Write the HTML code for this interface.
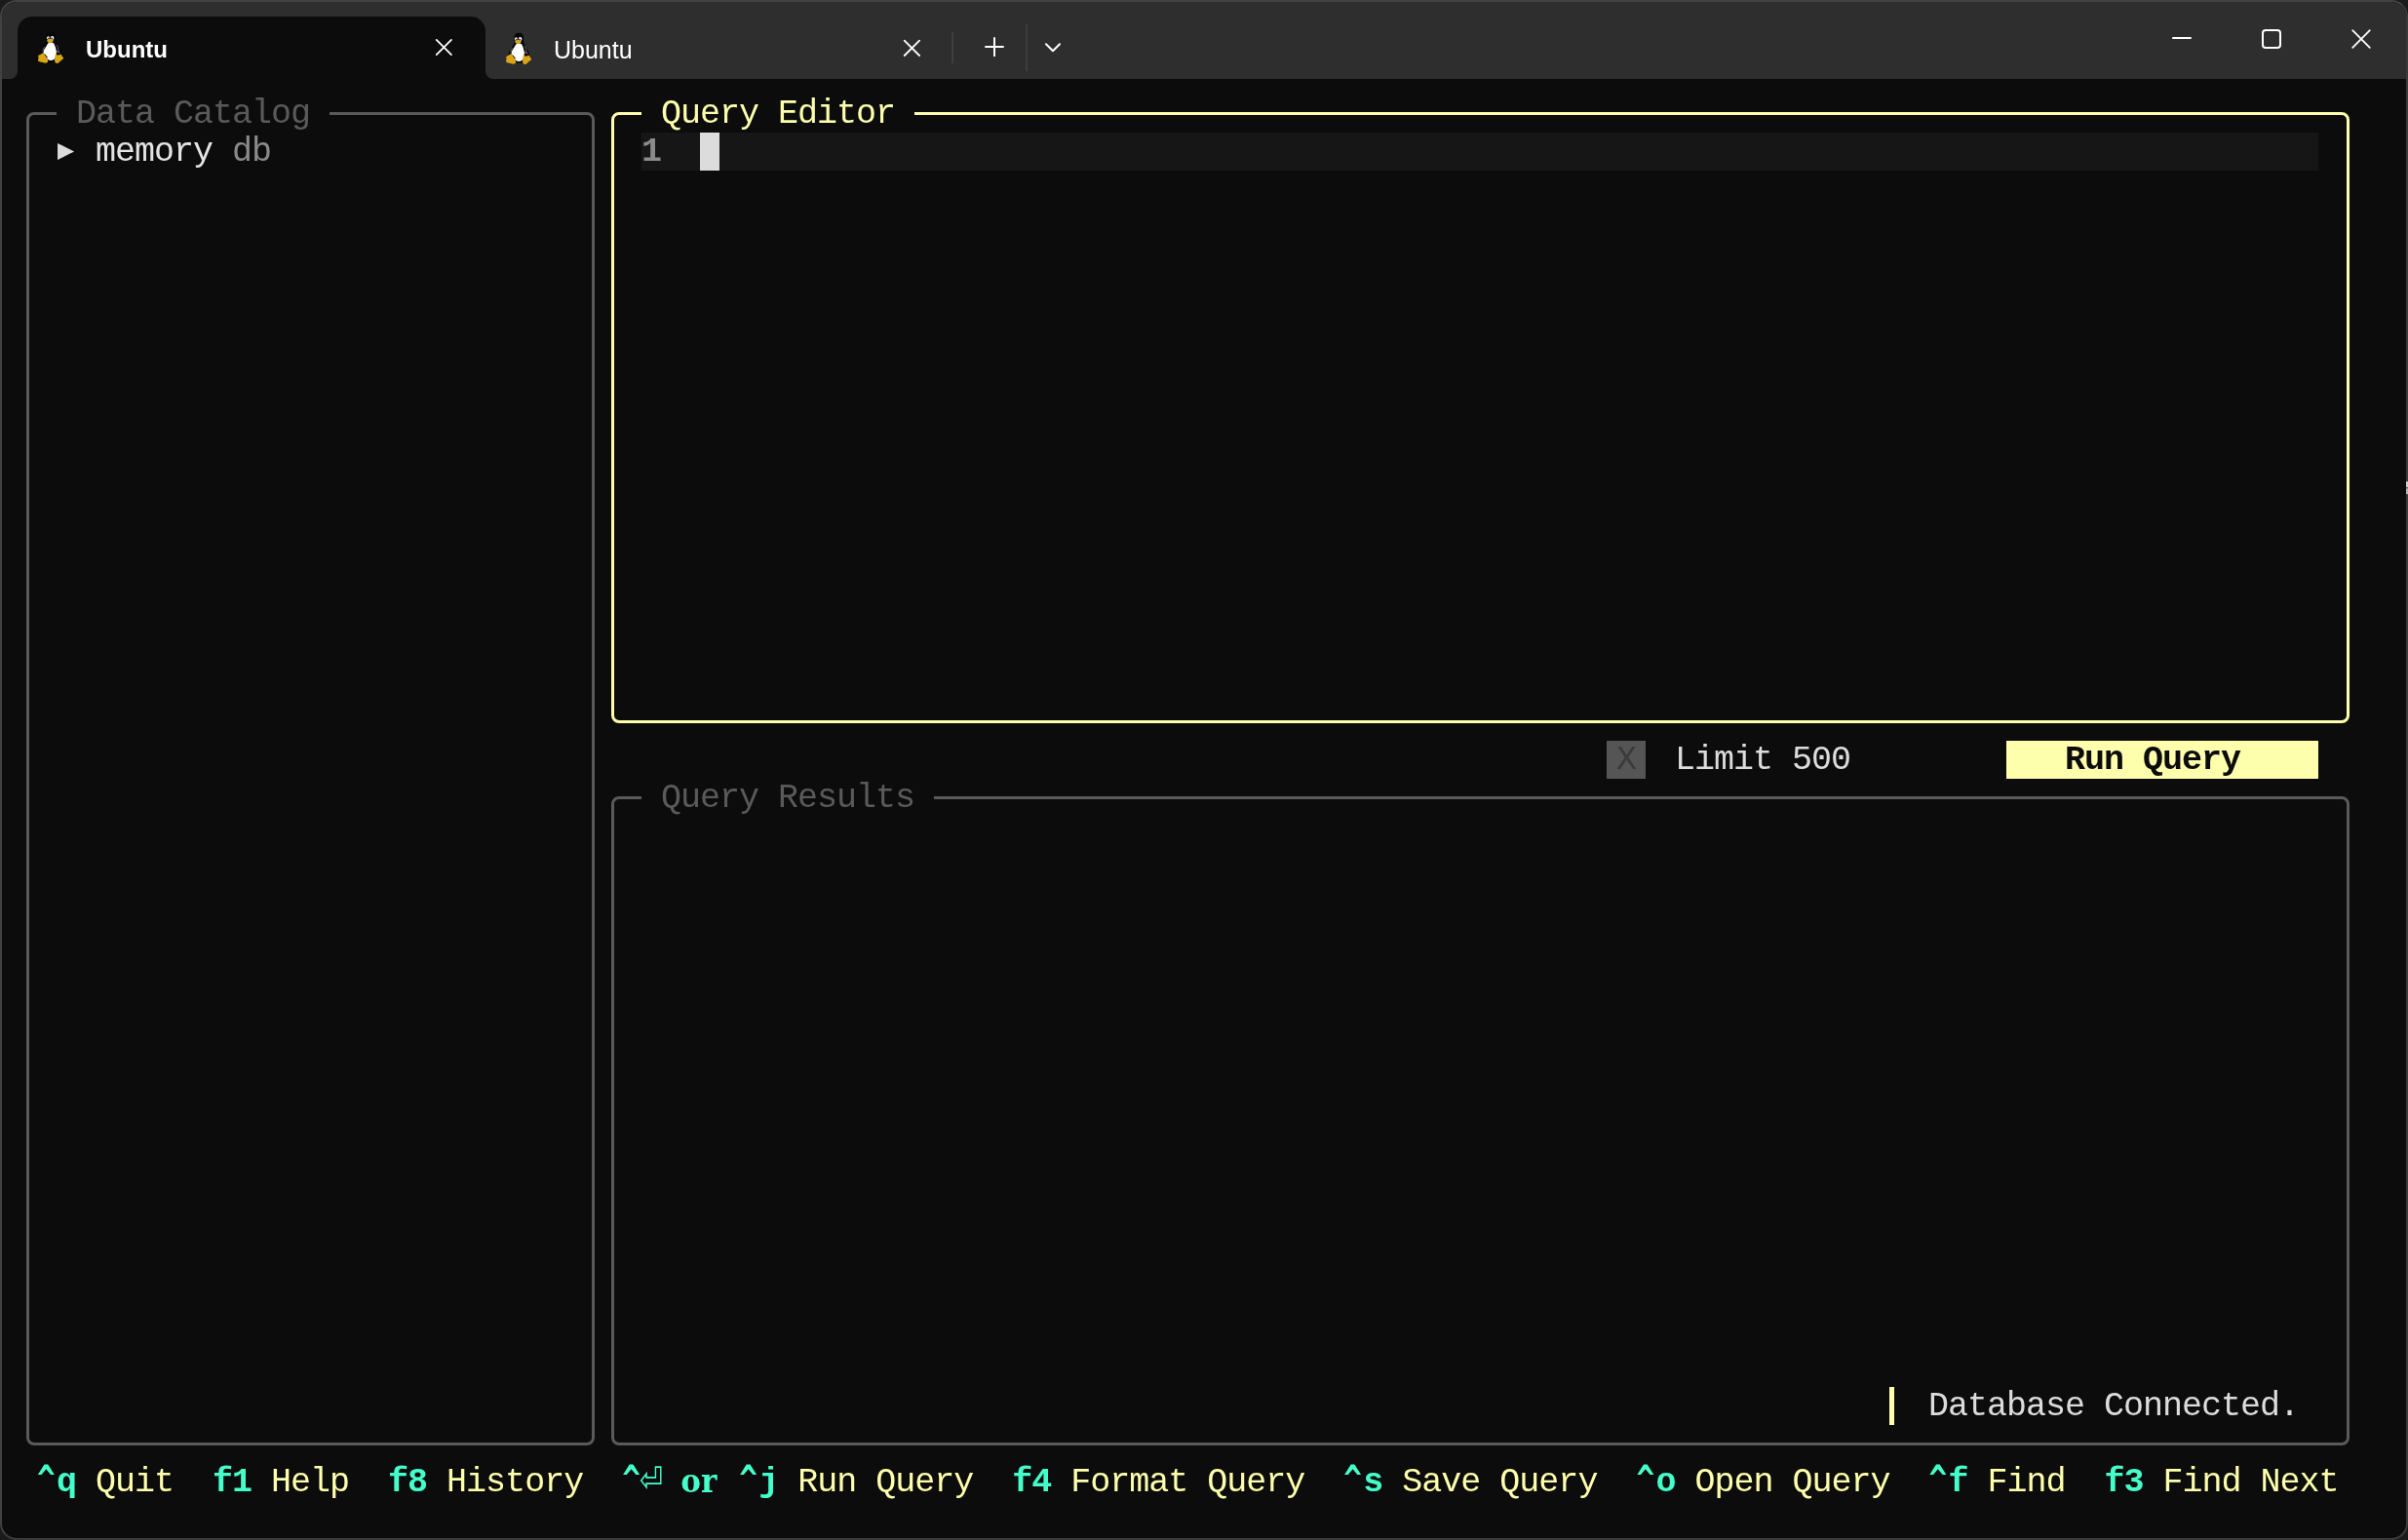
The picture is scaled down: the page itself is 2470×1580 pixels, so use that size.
<!DOCTYPE html>
<html lang="en">
<head>
<meta charset="utf-8">
<title>Ubuntu</title>
<style>
html,body{margin:0;padding:0;}
body{width:2470px;height:1580px;overflow:hidden;background:#1b1b1b;position:relative;}
#win{position:absolute;left:0;top:0;width:2466px;height:1576px;border:2px solid #414141;border-color:#414141 #3b3b3b #3b3b3b #414141;border-radius:17px;background:#0c0c0c;overflow:hidden;}
#inner{will-change:transform;position:absolute;left:-2px;top:-2px;width:2470px;height:1580px;}
#titlebar{position:absolute;left:2px;top:2px;width:2466px;height:79px;background:#2e2e2e;}
.abs{position:absolute;}
/* tabs */
#tab1{position:absolute;left:18px;top:17px;width:480px;height:64px;background:#0c0c0c;border-radius:15px 15px 0 0;}
.flare{position:absolute;width:8px;height:8px;top:73px;overflow:hidden;}
.flare i{position:absolute;display:block;width:16px;height:16px;border-radius:8px;box-shadow:0 0 0 8px #0c0c0c;}
.tabtxt{position:absolute;font-family:"Liberation Sans",sans-serif;font-size:24px;line-height:30px;color:#fff;white-space:pre;}
/* terminal text */
.t{position:absolute;height:39px;line-height:39px;margin-top:1px;font-family:"Liberation Mono","DejaVu Sans Mono",monospace;font-size:35px;letter-spacing:-1px;white-space:pre;color:#dcdcdc;}
.b{font-weight:bold;}
.k{color:#45ffca;font-weight:bold;}
.y{color:#feffac;}
.g{color:#5a5a5a;}
.box{position:absolute;border:3px solid #5a5a5a;border-radius:8px;box-sizing:border-box;}
.gap{position:absolute;background:#0c0c0c;height:9px;}
.sym{font-family:"DejaVu Sans Mono",monospace;}
.c,.e,.o{display:inline-block;vertical-align:top;height:39px;line-height:39px;letter-spacing:0;color:#45ffca;font-weight:bold;}
.c{width:20px;font-family:"DejaVu Sans Mono",monospace;font-size:31px;transform:translateY(-3.4px) scaleY(1.26);}
.e{width:20px;font-family:"DejaVu Sans Mono",monospace;font-weight:normal;font-size:39px;transform:translate(-1.8px,-5.8px) scaleY(1.31);}
.o{width:40px;font-family:"DejaVu Serif",serif;font-size:33px;transform-origin:0 50%;transform:translate(0.3px,-2.3px) scaleX(0.94);}
</style>
</head>
<body>
<div id="win"><div id="inner">
<div id="titlebar"></div>

<!-- active tab -->
<div id="tab1"></div>
<div class="flare" style="left:10px;"><i style="left:-8px;top:-8px;"></i></div>
<div class="flare" style="left:498px;"><i style="left:0;top:-8px;"></i></div>

<svg class="abs" style="left:37px;top:32px" width="29" height="34" viewBox="0 0 29 34">
<g>
<path d="M15.3 0.8 C12.5 0.8 10.6 2.8 10.6 5.5 C10.6 7.5 10.9 9.5 10.4 11.2 C9.8 13 8.6 14.5 7.4 16.5 C6 18.8 4.9 20.5 4.7 22.5 L4.7 27 L12 31.5 L19 31.5 L26.2 27 C26.5 23.4 25.4 20.2 24 17.6 C22.8 15.3 21 13 20.4 11 C19.9 9.2 20.2 7.5 20.1 5.5 C20 2.8 18.2 0.8 15.3 0.8 Z" fill="#050505"/>
<path d="M14.6 11.4 C12.8 11.4 12 12.4 11.4 13.8 C10.4 16 8.2 18.5 7.6 21 C7.2 23 8.2 24.5 9.6 26 C10.8 27.4 12 29.8 14.9 30 C17.6 30.1 19.4 28.6 20 26.4 C20.6 24 21.2 21.5 20.6 19 C20 16.6 19.2 14.5 18.4 12.8 C17.8 11.6 16.4 11.4 14.6 11.4 Z" fill="#fff"/>
<path d="M8.6 16.2 C7.6 17.6 7 19 6.9 20.6" stroke="#9a9a9a" stroke-width="0.7" fill="none"/>
<path d="M21.2 14.2 C22.2 16.2 23 18.2 23.2 20.4" stroke="#8a8a8a" stroke-width="0.7" fill="none"/>
<path d="M8.4 23.6 L11.4 27.4" stroke="#050505" stroke-width="1.4" fill="none"/>
<ellipse cx="12.5" cy="7" rx="1.5" ry="1.8" fill="#fff"/><ellipse cx="16.6" cy="6.9" rx="1.8" ry="1.9" fill="#fff"/>
<circle cx="12.9" cy="7.4" r="0.8" fill="#222"/><circle cx="16.2" cy="7.3" r="0.9" fill="#222"/>
<path d="M11 9.7 C12 8.8 13.2 8.1 14.1 8.1 C15.2 8.1 16.8 8.8 18 9.5 C17.2 10.8 15.8 12.3 14.4 12.3 C13 12.3 11.8 11 11 9.7 Z" fill="#dba615"/>
<path d="M6.4 22.5 C7.6 22.3 8.4 23.4 9.2 24.8 C10.2 26.6 12 28.4 12.2 30.2 C12.4 32 10.6 33 8.8 32.6 C7 32.2 4.4 31.6 2.8 31 C1.6 30.5 2 29.4 2.4 28.4 C2.8 27.2 2 26 2.4 25 C2.8 24 4.4 24.2 5.2 23.4 C5.6 23 5.8 22.6 6.4 22.5 Z" fill="#dba615"/>
<path d="M20.2 23.6 C20.8 24.6 22.2 24.8 23.4 24.4 C24.4 24 25.2 23.4 25.8 24 C26.4 24.8 26.6 25.8 27.4 26.6 C28.2 27.4 28.4 28 27.4 28.8 C26 29.8 24.6 30.8 23.6 32 C22.6 33.2 20.8 33.4 19.8 32.2 C18.8 31 19 29.4 19.2 27.8 C19.4 26.2 19.4 24.6 20.2 23.6 Z" fill="#dba615"/>
<path d="M20.6 21.6 C21.6 20.6 23.4 20.8 24.2 22.2" stroke="#d0d0d0" stroke-width="0.9" fill="none"/>
<ellipse cx="22.4" cy="22.9" rx="1.5" ry="1.1" fill="#050505"/>
</g>
</svg>
<div class="tabtxt" style="left:88px;top:36px;font-weight:bold;">Ubuntu</div>
<svg class="abs" style="left:445px;top:38px" width="20" height="20" viewBox="0 0 20 20"><path d="M2.7 2.9 L17.9 18.1 M17.9 2.9 L2.7 18.1" stroke="#fff" stroke-width="1.8" fill="none" stroke-linecap="round"/></svg>

<!-- inactive tab -->
<svg class="abs" style="left:517px;top:33px" width="29" height="34" viewBox="0 0 29 34">
<g>
<path d="M15.3 0.8 C12.5 0.8 10.6 2.8 10.6 5.5 C10.6 7.5 10.9 9.5 10.4 11.2 C9.8 13 8.6 14.5 7.4 16.5 C6 18.8 4.9 20.5 4.7 22.5 L4.7 27 L12 31.5 L19 31.5 L26.2 27 C26.5 23.4 25.4 20.2 24 17.6 C22.8 15.3 21 13 20.4 11 C19.9 9.2 20.2 7.5 20.1 5.5 C20 2.8 18.2 0.8 15.3 0.8 Z" fill="#050505"/>
<path d="M14.6 11.4 C12.8 11.4 12 12.4 11.4 13.8 C10.4 16 8.2 18.5 7.6 21 C7.2 23 8.2 24.5 9.6 26 C10.8 27.4 12 29.8 14.9 30 C17.6 30.1 19.4 28.6 20 26.4 C20.6 24 21.2 21.5 20.6 19 C20 16.6 19.2 14.5 18.4 12.8 C17.8 11.6 16.4 11.4 14.6 11.4 Z" fill="#fff"/>
<path d="M8.6 16.2 C7.6 17.6 7 19 6.9 20.6" stroke="#9a9a9a" stroke-width="0.7" fill="none"/>
<path d="M21.2 14.2 C22.2 16.2 23 18.2 23.2 20.4" stroke="#8a8a8a" stroke-width="0.7" fill="none"/>
<path d="M8.4 23.6 L11.4 27.4" stroke="#050505" stroke-width="1.4" fill="none"/>
<ellipse cx="12.5" cy="7" rx="1.5" ry="1.8" fill="#fff"/><ellipse cx="16.6" cy="6.9" rx="1.8" ry="1.9" fill="#fff"/>
<circle cx="12.9" cy="7.4" r="0.8" fill="#222"/><circle cx="16.2" cy="7.3" r="0.9" fill="#222"/>
<path d="M11 9.7 C12 8.8 13.2 8.1 14.1 8.1 C15.2 8.1 16.8 8.8 18 9.5 C17.2 10.8 15.8 12.3 14.4 12.3 C13 12.3 11.8 11 11 9.7 Z" fill="#dba615"/>
<path d="M6.4 22.5 C7.6 22.3 8.4 23.4 9.2 24.8 C10.2 26.6 12 28.4 12.2 30.2 C12.4 32 10.6 33 8.8 32.6 C7 32.2 4.4 31.6 2.8 31 C1.6 30.5 2 29.4 2.4 28.4 C2.8 27.2 2 26 2.4 25 C2.8 24 4.4 24.2 5.2 23.4 C5.6 23 5.8 22.6 6.4 22.5 Z" fill="#dba615"/>
<path d="M20.2 23.6 C20.8 24.6 22.2 24.8 23.4 24.4 C24.4 24 25.2 23.4 25.8 24 C26.4 24.8 26.6 25.8 27.4 26.6 C28.2 27.4 28.4 28 27.4 28.8 C26 29.8 24.6 30.8 23.6 32 C22.6 33.2 20.8 33.4 19.8 32.2 C18.8 31 19 29.4 19.2 27.8 C19.4 26.2 19.4 24.6 20.2 23.6 Z" fill="#dba615"/>
<path d="M20.6 21.6 C21.6 20.6 23.4 20.8 24.2 22.2" stroke="#d0d0d0" stroke-width="0.9" fill="none"/>
<ellipse cx="22.4" cy="22.9" rx="1.5" ry="1.1" fill="#050505"/>
</g>
</svg>
<div class="tabtxt" style="left:568px;top:36px;font-size:25px;">Ubuntu</div>
<svg class="abs" style="left:925px;top:39px" width="20" height="20" viewBox="0 0 20 20"><path d="M2.7 2.6 L18.1 18 M18.1 2.6 L2.7 18" stroke="#fff" stroke-width="1.8" fill="none" stroke-linecap="round"/></svg>
<div class="abs" style="left:976px;top:33px;width:2px;height:32px;background:#3f3f3f;"></div>
<svg class="abs" style="left:1009px;top:37px" width="22" height="22" viewBox="0 0 22 22"><path d="M2 11.1 H20 M11 2 V20.2" stroke="#fff" stroke-width="2" fill="none" stroke-linecap="round"/></svg>
<div class="abs" style="left:1052px;top:25px;width:2px;height:48px;background:#3d3d3d;"></div>
<svg class="abs" style="left:1070px;top:42px" width="20" height="14" viewBox="0 0 20 14"><path d="M3 3.2 L10 10.2 L17 3.2" stroke="#fff" stroke-width="2" fill="none" stroke-linecap="round" stroke-linejoin="round"/></svg>

<!-- window controls -->
<div class="abs" style="left:2228px;top:38px;width:20px;height:2px;background:#fff;border-radius:1px;"></div>
<div class="abs" style="left:2320px;top:30px;width:16px;height:16px;border:2px solid #fff;border-radius:4px;"></div>
<svg class="abs" style="left:2410px;top:28px" width="24" height="24" viewBox="0 0 24 24"><path d="M3.2 3.2 L20.8 20.8 M20.8 3.2 L3.2 20.8" stroke="#fff" stroke-width="1.8" fill="none" stroke-linecap="round"/></svg>

<!-- TERMINAL -->
<!-- Data Catalog box -->
<div class="box" style="left:27px;top:115px;width:583px;height:1368px;"></div>
<div class="gap" style="left:58px;top:112px;width:280px;"></div>
<div class="t g" style="left:78px;top:97px;">Data Catalog</div>
<div class="t sym" style="left:59px;top:133px;color:#dcdcdc;letter-spacing:0;font-size:28.5px;">▶</div>
<div class="t" style="left:98px;top:136px;color:#e4e4e4;">memory <span style="color:#8a8a8a">db</span></div>

<!-- Query Editor box -->
<div class="box" style="left:627px;top:115px;width:1783px;height:627px;border-color:#feffac;"></div>
<div class="gap" style="left:658px;top:112px;width:280px;"></div>
<div class="t y" style="left:678px;top:97px;">Query Editor</div>
<div class="abs" style="left:658px;top:136px;width:1720px;height:39px;background:#161616;"></div>
<div class="t b" style="left:658px;top:136px;color:#8b8b8b;">1</div>
<div class="abs" style="left:718px;top:136px;width:20px;height:39px;background:#dcdcdc;"></div>

<!-- Limit row -->
<div class="abs" style="left:1648px;top:760px;width:40px;height:39px;background:#555;"></div>
<div class="t" style="left:1658px;top:760px;color:#3b3b3b;">X</div>
<div class="t" style="left:1718px;top:760px;">Limit 500</div>
<div class="abs" style="left:2058px;top:760px;width:320px;height:39px;background:#feffac;"></div>
<div class="t b" style="left:2118px;top:760px;color:#0c0c0c;">Run Query</div>

<!-- Query Results box -->
<div class="box" style="left:627px;top:817px;width:1783px;height:666px;"></div>
<div class="gap" style="left:658px;top:814px;width:300px;"></div>
<div class="t g" style="left:678px;top:799px;">Query Results</div>

<!-- toast -->
<div class="abs" style="left:1938px;top:1423px;width:5px;height:39px;background:#feffac;"></div>
<div class="t" style="left:1978px;top:1423px;">Database Connected.</div>

<!-- footer -->
<div class="t y" style="left:38px;top:1501px;"><span class="k"><span class="c">^</span>q</span> Quit  <span class="k">f1</span> Help  <span class="k">f8</span> History  <span class="k"><span class="c">^</span><span class="e">⏎</span></span> <span class="o">or</span> <span class="k"><span class="c">^</span>j</span> Run Query  <span class="k">f4</span> Format Query  <span class="k"><span class="c">^</span>s</span> Save Query  <span class="k"><span class="c">^</span>o</span> Open Query  <span class="k"><span class="c">^</span>f</span> Find  <span class="k">f3</span> Find Next</div>

</div></div>
<div class="abs" style="left:2468px;top:494px;width:2px;height:6px;background:#cfcfcf;"></div>
<div class="abs" style="left:2468px;top:501px;width:2px;height:6px;background:#b4b4b4;"></div>
</body>
</html>
